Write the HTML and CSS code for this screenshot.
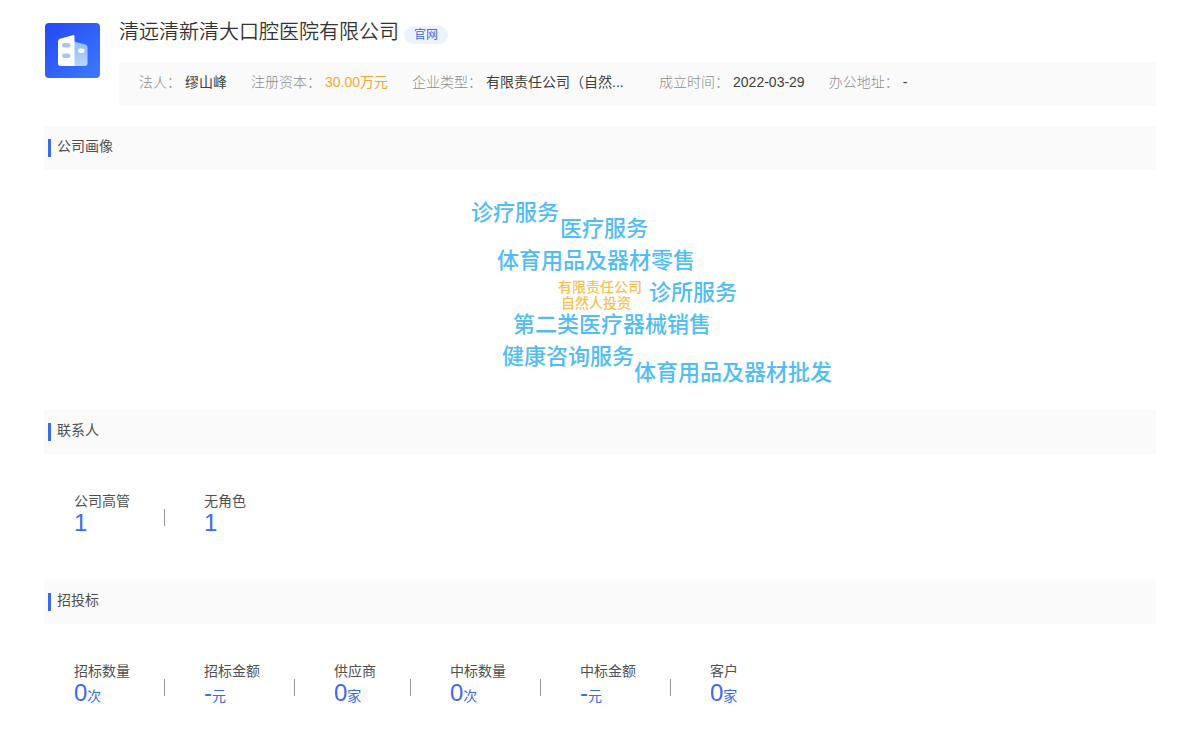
FILE: index.html
```html
<!DOCTYPE html>
<html lang="zh-CN">
<head>
<meta charset="utf-8">
<title>清远清新清大口腔医院有限公司</title>
<link rel="stylesheet" href="styles.css">
</head>
<body>
<main class="page">
  <header class="company">
    <svg class="logo" viewBox="0 0 55 55" aria-hidden="true">
      <defs>
        <linearGradient id="tile" x1="0" y1="0" x2="1" y2="1"><stop offset="0" stop-color="#2547f5"/><stop offset="1" stop-color="#3c7afc"/></linearGradient>
        <linearGradient id="wing" x1="0" y1="0" x2="0" y2="1"><stop offset="0" stop-color="#8fbcfb"/><stop offset="1" stop-color="#b5d5fc"/></linearGradient>
      </defs>
      <rect width="55" height="55" rx="4" fill="url(#tile)"/>
      <path d="M29 18.500L40.500 21.500Q42.500 22 42.500 24V40.500Q42.500 43 40 43H29Z" fill="url(#wing)"/>
      <path d="M15 15.800L27.500 12.200Q29.500 11.800 29.500 13.500V43H15.500Q13 43 13 40.500V18.500Q13 16.500 15 15.800Z" fill="#fff"/>
      <rect x="17" y="20" width="8.500" height="4.500" rx="2.200" fill="#a3c8fb"/>
      <rect x="17" y="30.500" width="8.500" height="4.500" rx="2.200" fill="#a3c8fb"/>
      <rect x="33" y="25.500" width="6.500" height="4.500" rx="2.200" fill="#fff"/>
    </svg>
    <div class="company-main">
      <div class="title-row">
        <h1 class="name">清远清新清大口腔医院有限公司</h1>
        <a class="site-tag" href="#">官网</a>
      </div>
      <dl class="facts">
        <div class="fact"><dt>法人：</dt><dd>缪山峰</dd></div>
        <div class="fact"><dt>注册资本：</dt><dd class="money">30.00万元</dd></div>
        <div class="fact"><dt>企业类型：</dt><dd class="type">有限责任公司（自然...</dd></div>
        <div class="fact"><dt>成立时间：</dt><dd>2022-03-29</dd></div>
        <div class="fact"><dt>办公地址：</dt><dd>-</dd></div>
      </dl>
    </div>
  </header>

  <section>
    <h2 class="heading">公司画像</h2>
    <div class="cloud">
      <span class="word w1">诊疗服务</span>
      <span class="word w2">医疗服务</span>
      <span class="word w3">体育用品及器材零售</span>
      <span class="word small w4">有限责任公司</span>
      <span class="word small w5">自然人投资</span>
      <span class="word w6">诊所服务</span>
      <span class="word w7">第二类医疗器械销售</span>
      <span class="word w8">健康咨询服务</span>
      <span class="word w9">体育用品及器材批发</span>
    </div>
  </section>

  <section>
    <h2 class="heading">联系人</h2>
    <ul class="stats">
      <li class="stat"><span class="label">公司高管</span><span class="value">1</span></li>
      <li class="stat"><span class="label">无角色</span><span class="value">1</span></li>
    </ul>
  </section>

  <section>
    <h2 class="heading">招投标</h2>
    <ul class="stats">
      <li class="stat"><span class="label">招标数量</span><span class="value">0<small>次</small></span></li>
      <li class="stat"><span class="label">招标金额</span><span class="value">-<small>元</small></span></li>
      <li class="stat"><span class="label">供应商</span><span class="value">0<small>家</small></span></li>
      <li class="stat"><span class="label">中标数量</span><span class="value">0<small>次</small></span></li>
      <li class="stat"><span class="label">中标金额</span><span class="value">-<small>元</small></span></li>
      <li class="stat"><span class="label">客户</span><span class="value">0<small>家</small></span></li>
    </ul>
  </section>
</main>
</body>
</html>
```
FILE: styles.css
```css
* { box-sizing: border-box; }
body {
  margin: 0;
  background: #fff;
  color: #505050;
  font: 14px/20px "Liberation Sans", "Noto Sans CJK SC", sans-serif;
}
h1, h2, dl, dd, ul { margin: 0; padding: 0; font-weight: 400; }
.page { padding: 16px 44px 0; }

.company { display: flex; gap: 20px; margin-bottom: 20px; }
.logo { flex: none; width: 55px; height: 55px; margin: 7px 0 0 1px; }
.company-main { flex: 1; min-width: 0; margin-left: -1px; }
.title-row { display: flex; align-items: flex-start; gap: 5px; height: 46px; }
.name { font-size: 20px; line-height: 32px; font-weight: 350; color: #333; }
.site-tag {
  margin-top: 10px;
  padding: 0 10px;
  border-radius: 9px;
  background: #ecf3fd;
  color: #3a6be8;
  font-size: 12px;
  line-height: 18px;
  text-decoration: none;
}
.facts { display: flex; gap: 24px; height: 44px; padding: 10px 20px; background: #fafafa; }
.fact { display: flex; gap: 4px; white-space: nowrap; }
.fact dt { color: #8c8c8c; font-weight: 300; }
.fact dd { color: #404040; }
.fact .money { color: #f0a830; }
.fact .type { width: 149px; }

.heading {
  display: flex;
  height: 44px;
  padding: 10px 4px;
  background: #fafafa;
  font-size: 14px;
  line-height: 20px;
}
.heading::before {
  content: "";
  width: 3px;
  height: 18px;
  margin: 3px 6px 0 0;
  background: #3a6be8;
}

.cloud { position: relative; width: 480px; height: 240px; margin: 0 auto; }
.word { position: absolute; color: #52bdf5; font-size: 22px; line-height: 32px; font-weight: 500; white-space: nowrap; }
.small { color: #f5c252; font-size: 14px; line-height: 16px; }
.w1 { left: 111px; top: 27px; }
.w2 { left: 200px; top: 43px; }
.w3 { left: 137px; top: 75px; }
.w4 { left: 198px; top: 109px; }
.w5 { left: 201px; top: 125px; }
.w6 { left: 289px; top: 107px; }
.w7 { left: 153px; top: 139px; }
.w8 { left: 142px; top: 171px; }
.w9 { left: 274px; top: 187px; }

.stats { display: flex; height: 126px; padding: 37px 30px; list-style: none; }
.stat { display: flex; flex-direction: column; position: relative; }
.stat + .stat { margin-left: 74px; }
.stat + .stat::before {
  content: "";
  position: absolute;
  left: -40px;
  top: 18px;
  width: 1px;
  height: 17px;
  background: #999;
}
.value { color: #3a6be8; font-size: 24px; line-height: 24px; }
.value small { font-size: 14px; }
```
